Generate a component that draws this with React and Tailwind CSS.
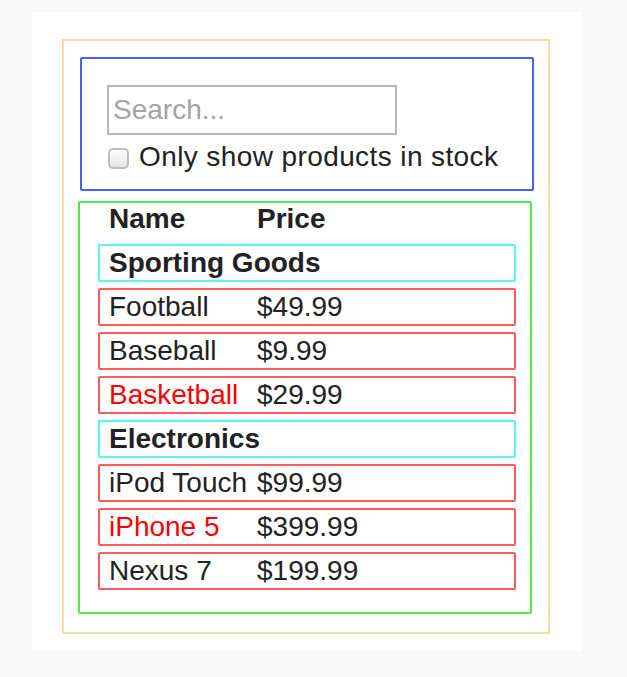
import React from "react";

const rows = [
  { type: "cat", name: "Sporting Goods" },
  { name: "Football", price: "$49.99" },
  { name: "Baseball", price: "$9.99" },
  { name: "Basketball", price: "$29.99", out: true },
  { type: "cat", name: "Electronics" },
  { name: "iPod Touch", price: "$99.99" },
  { name: "iPhone 5", price: "$399.99", out: true },
  { name: "Nexus 7", price: "$199.99" },
];

export default function App() {
  return (
    <div
      className="min-h-[677px] w-full bg-[#f8f8f8] pt-[12px] pl-[32px]"
      style={{ fontFamily: '"Liberation Sans", Arial, Helvetica, sans-serif' }}
    >
      <div className="w-[550px] bg-white pt-[27px] pb-[17px] pl-[30px] pr-[32px] text-[28px] text-[#222]">
        {/* FilterableProductTable */}
        <div className="border-2 border-[#fdd99e] pt-[16px] pb-[18px]">
          {/* SearchBar */}
          <div className="ml-[16px] mr-[14px] border-2 border-[#4262f7] rounded-[2px] pt-[26px] pb-[15px] pl-[25px]">
            <input
              type="text"
              placeholder="Search..."
              className="block w-[290px] h-[50px] border-2 border-[#b5b5b5] pl-[4px] text-[28px] leading-[34px] text-[#222] placeholder:text-[#a3a3a3] outline-none"
            />
            <label className="mt-[5px] flex items-center h-[34px] leading-[34px]">
              <input
                type="checkbox"
                className="appearance-none ml-[1px] w-[21px] h-[21px] rounded-[5px] border-2 border-[#bdbdbd] bg-linear-to-b from-white to-[#e4e4e4] mt-[2px]"
              />
              <span className="ml-[10px] tracking-[0.4px]">Only show products in stock</span>
            </label>
          </div>
          {/* ProductTable */}
          <div className="mt-[10px] ml-[14px] mr-[16px] border-2 border-[#46ee46] rounded-[2px] pt-[2px] pb-[22px]">
            <div className="flex pl-[29px] font-bold leading-[28px] mb-[11px]">
              <div className="w-[148px]">Name</div>
              <div>Price</div>
            </div>
            <div className="ml-[18px] mr-[14px] flex flex-col gap-[6px]">
              {rows.map((r, i) =>
                r.type === "cat" ? (
                  <div
                    key={i}
                    className="h-[38px] border-2 border-[#55f6f6] rounded-[2px] pl-[9px] font-bold leading-[34px]"
                  >
                    {r.name}
                  </div>
                ) : (
                  <div
                    key={i}
                    className="h-[38px] border-2 border-[#ff5b5b] rounded-[2px] pl-[9px] flex leading-[34px]"
                  >
                    <div className={`w-[148px] ${r.out ? "text-[#ff0000]" : ""}`}>{r.name}</div>
                    <div>{r.price}</div>
                  </div>
                )
              )}
            </div>
          </div>
        </div>
      </div>
    </div>
  );
}
